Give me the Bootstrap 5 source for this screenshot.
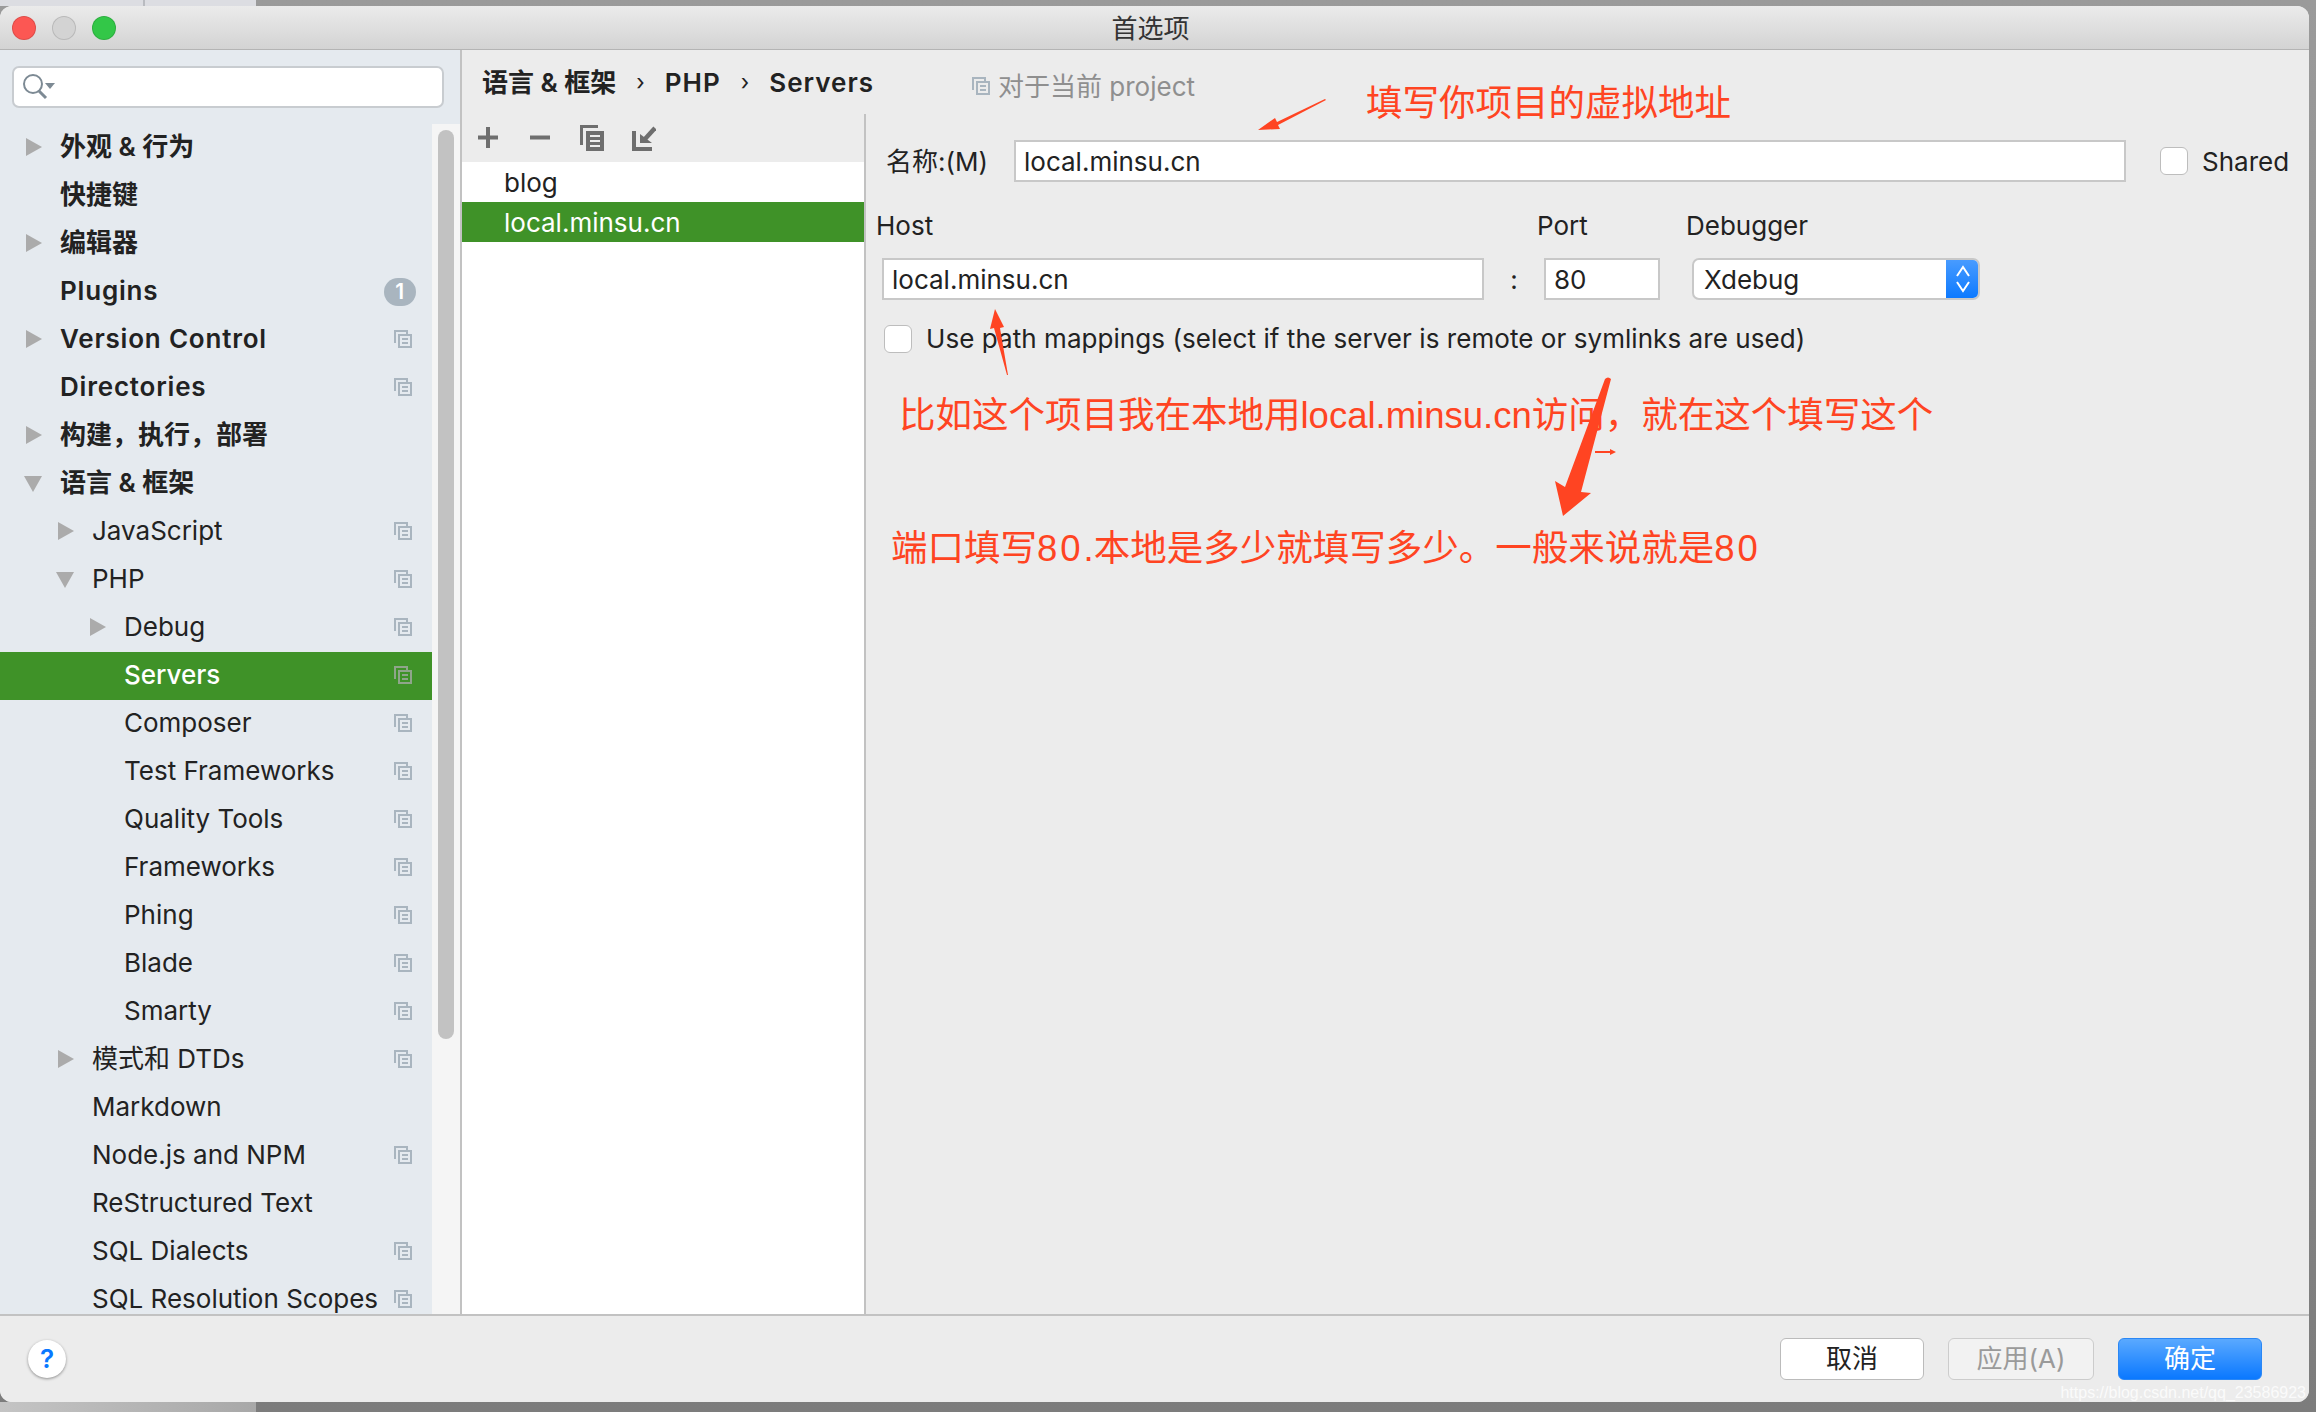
<!DOCTYPE html>
<html lang="zh-CN">
<head>
  <meta charset="UTF-8" />
  <meta name="viewport" content="width=device-width, initial-scale=1" />
  <title>首选项</title>
  <link href="https://cdn.jsdelivr.net/npm/bootstrap@5.3.0/dist/css/bootstrap.min.css" rel="stylesheet" />
  <style>
    html, body { height: 100%; overflow: hidden; }
    body {
      font-family: Inter, "Noto Sans CJK SC", sans-serif;
      font-size: 26px;
      color: #222;
      background: #9a9a9a;
    }
    .desk {
      width: 2316px; height: 1412px; padding-top: 6px; position: relative;
      background:
        linear-gradient(#b9bbc0, #b9bbc0) 143px top / 2px 6px no-repeat,
        linear-gradient(#dcdde2, #dcdde2) left top / 256px 6px no-repeat,
        linear-gradient(90deg, #c4c4c4, #a8a8a8) left bottom / 256px 10px no-repeat,
        linear-gradient(#9a9a9a 0, #7c7c7c 100%);
    }
    .win {
      width: 2309px; height: 1396px; background: #ececec;
      border-radius: 12px; overflow: hidden; position: relative;
    }
    .titlebar {
      height: 44px; flex: none; position: relative;
      background: linear-gradient(#ebebeb, #d3d3d3);
      border-bottom: 1px solid #b4b4b4;
    }
    .light { width: 24px; height: 24px; border-radius: 50%; border: 1px solid rgba(0,0,0,.12); }
    .light-red { background: #fc5753; }
    .light-grey { background: #d3d3d3; }
    .light-green { background: #33c748; }
    .lights { padding-left: 12px; gap: 16px; }
    .win-title { font-size: 26px; line-height: 46px; color: #333; left: 0; right: 8px; top: 0; }
    .panes { height: 1264px; flex: none; }
    .side {
      width: 462px; flex: none; background: #e5eaef; border-right: 2px solid #c2c2c2;
    }
    .search-wrap { height: 74px; padding: 16px 16px 0 12px; }
    .search-box {
      height: 42px; background: #fff; border: 2px solid #c8ccd0; border-radius: 7px;
      padding-left: 8px;
    }
    .tree-wrap { height: 1190px; }
    .tree { width: 432px; overflow: hidden; }
    .tree-row { height: 48px; flex: none; padding-right: 20px; white-space: nowrap; }
    .tree-row span { margin-top: -3px; }
    .tree-row.picked { background: #3f9228; color: #fff; font-weight: 500; }
    .tree-row.top { font-weight: 600; }
    .tree-row.top-latin { letter-spacing: .8px; }
    .lv0 { padding-left: 60px; }
    .lv1 { padding-left: 92px; }
    .lv2 { padding-left: 124px; }
    .arrow { position: absolute; margin-left: -36px; margin-top: -2px; width: 18px; height: 18px; }
    .scroll-track { width: 28px; background: #f5f5f5; padding: 6px 6px 0; }
    .scroll-thumb { height: 909px; background: #c2c2c2; border-radius: 8px; }
    .count-pill {
      width: 32px; height: 28px; border-radius: 14px; background: #a9b5bf; color: #fff;
      font-size: 21px; line-height: 28px; text-align: center; margin-right: -4px;
    }
    .row-copy { margin-top: -2px; }
    .ic-off, .scope-icon { color: #a9b5bf; }
    .ic-on { color: #8fa58a; }
    .crumbs { height: 64px; flex: none; padding-left: 20px; font-weight: 600; }
    .crumb-latin { letter-spacing: 1px; }
    .crumb-sep { font-weight: 400; font-size: 22px; margin: 0 20px; }
    .scope-note { color: #8f8f8f; font-weight: 400; margin-left: 98px; padding-top: 8px; }
    .list-pane { width: 404px; flex: none; border-right: 2px solid #c2c2c2; }
    .list-tools { height: 48px; padding-left: 16px; gap: 30px; }
    .tool-import { margin-left: -2px; }
    .list-body { background: #fff; }
    .list-item { height: 40px; padding-left: 42px; line-height: 42px; }
    .list-item.picked { background: #3f9228; color: #fff; }
    .form-pane { padding: 26px 20px 0 12px; }
    .field-label { margin-left: 8px; width: 128px; flex: none; }
    .flat-input.form-control {
      height: 42px; border: 2px solid #c8c8c8; border-radius: 0; font-size: 26px; color: #222;
      padding: 0 8px; background: #fff; font-family: Inter, sans-serif;
    }
    .name-input { width: 1112px; flex: none; }
    .tick.form-check-input {
      width: 28px; height: 28px; margin: 0; border: 1px solid #bdbdbd; border-radius: 6px; flex: none;
    }
    .shared-tick.form-check-input { margin-left: 34px; }
    .shared-label { margin-left: 14px; }
    .labels { margin-top: 24px; height: 44px; padding-bottom: 5px; }
    .host-label { width: 661px; margin-left: -2px; }
    .port-label { width: 149px; }
    .conn-row { margin-top: 8px; padding-left: 4px; }
    .host-input { width: 602px; flex: none; }
    .colon { width: 60px; flex: none; text-align: center; }
    .port-input { width: 116px; flex: none; }
    .debugger {
      width: 288px; height: 42px; margin-left: 32px; background: #fff; flex: none;
      border: 2px solid #c8c8c8; border-radius: 7px; padding-left: 10px; position: relative; overflow: hidden;
    }
    .stepper {
      width: 34px; position: absolute; right: -2px; top: -2px; bottom: -2px;
      background: linear-gradient(#4b9dff, #0a78ff);
    }
    .mapping-row { margin-top: 19px; padding-left: 6px; gap: 14px; letter-spacing: .06px; }
    .bottom-bar { height: 88px; flex: none; border-top: 2px solid #c2c2c2; background: #ececec; padding: 0 47px 0 28px; }
    .help-btn {
      width: 38px; height: 38px; border-radius: 50%; background: #fff; color: #0a78ff; font-weight: 600;
      box-shadow: 0 1px 3px rgba(0,0,0,.4); line-height: 38px; text-align: center; font-size: 26px;
    }
    .mac-btn.btn {
      width: 144px; height: 42px; padding: 0; font-size: 26px; line-height: 38px; border-radius: 6px;
      border: 1px solid #bbb; background: #fff; color: #222;
    }
    .mac-btn.apply { width: 146px; background: #f2f2f2; color: #9a9a9a; border-color: #ccc; opacity: 1; }
    .mac-btn.ok { background: linear-gradient(#5aa9ff, #0a78ff); color: #fff; border-color: #2a87f5; }
    .note { position: absolute; color: #ff4422; font-size: 36.5px; line-height: 48px; white-space: nowrap; font-family: "Liberation Sans", "Noto Sans CJK SC", sans-serif; }
    .note1 { left: 1366px; top: 80px; }
    .note2 { left: 899px; top: 392px; }
    .note3 { left: 891px; top: 525px; }
    .note-num { letter-spacing: 3px; }
    .scribble { position: absolute; left: 0; top: 0; pointer-events: none; }
    .stamp {
      position: absolute; right: 3px; bottom: 0; color: rgba(255,255,255,.8); font-size: 16px; line-height: 18px;
      font-family: "Liberation Sans", sans-serif;
    }
  </style>
</head>
<body>
  <svg width="0" height="0" class="d-block">
    <defs>
      <symbol id="ic-copy" viewBox="0 0 18 18">
        <path d="M1 13V1h12v3" fill="none" stroke="currentColor" stroke-width="2"/>
        <rect x="5" y="5" width="12" height="12" fill="none" stroke="currentColor" stroke-width="2"/>
        <path d="M8 9h6M8 13h6" stroke="currentColor" stroke-width="2"/>
      </symbol>
      <symbol id="ic-right" viewBox="0 0 18 18"><path d="M2 0l16 9-16 9z" fill="#ababab"/></symbol>
      <symbol id="ic-down" viewBox="0 0 18 18"><path d="M0 2h18l-9 16z" fill="#ababab"/></symbol>
    </defs>
  </svg>

  <div class="desk">
    <div class="win d-flex flex-column">
      <div class="titlebar d-flex align-items-center lights">
        <div class="light light-red"></div>
        <div class="light light-grey"></div>
        <div class="light light-green"></div>
        <div class="win-title position-absolute text-center">首选项</div>
      </div>

      <div class="panes d-flex">
        <div class="side d-flex flex-column">
          <div class="search-wrap">
            <div class="search-box d-flex align-items-center">
              <svg width="34" height="28" viewBox="0 0 34 28">
                <circle cx="11" cy="11" r="9" fill="none" stroke="#7d8a94" stroke-width="2"/>
                <path d="M17 18l7 7" stroke="#7d8a94" stroke-width="3"/>
                <path d="M23 10h10l-5 6z" fill="#7d8a94"/>
              </svg>
            </div>
          </div>
          <div class="tree-wrap d-flex">
            <div class="tree d-flex flex-column" id="tree"></div>
            <div class="scroll-track"><div class="scroll-thumb"></div></div>
          </div>
        </div>

        <div class="flex-grow-1 d-flex flex-column">
          <div class="crumbs d-flex align-items-center">
            <span>语言 &amp; 框架</span><span class="crumb-sep">›</span><span class="crumb-latin">PHP</span><span class="crumb-sep">›</span><span class="crumb-latin">Servers</span>
            <span class="scope-note d-flex align-items-center gap-2">
              <svg width="18" height="18" class="scope-icon"><use href="#ic-copy"/></svg>对于当前 project
            </span>
          </div>
          <div class="flex-grow-1 d-flex">
            <div class="list-pane d-flex flex-column">
              <div class="list-tools d-flex align-items-center">
                <svg width="22" height="22" viewBox="0 0 22 22"><path d="M10 0v21M0 10.500h20" stroke="#6e6e6e" stroke-width="4"/></svg>
                <svg width="20" height="22" viewBox="0 0 20 22"><path d="M0 10.500h20" stroke="#6e6e6e" stroke-width="4"/></svg>
                <svg width="24" height="26" viewBox="0 0 24 26">
                  <path d="M0 20V0h18v3H3v17z" fill="#6e6e6e"/>
                  <path d="M6 6h18v20H6z" fill="#6e6e6e"/>
                  <path d="M10 10h10v2H10zM10 15h10v2H10zM10 20h10v2H10z" fill="#ececec"/>
                </svg>
                <svg class="tool-import" width="24" height="26" viewBox="0 0 24 26">
                  <path d="M2 6v18h18" fill="none" stroke="#6e6e6e" stroke-width="4"/>
                  <path d="M13 14L23 3" stroke="#6e6e6e" stroke-width="4.500"/>
                  <path d="M8 9v9h12z" fill="#6e6e6e"/>
                </svg>
              </div>
              <div class="list-body flex-grow-1">
                <div class="list-item">blog</div>
                <div class="list-item picked">local.minsu.cn</div>
              </div>
            </div>

            <div class="form-pane flex-grow-1">
              <div class="d-flex align-items-center">
                <label class="field-label" for="srvName">名称:(M)</label>
                <input id="srvName" class="form-control flat-input name-input" value="local.minsu.cn" />
                <input id="srvShared" type="checkbox" class="form-check-input tick shared-tick" />
                <label class="shared-label" for="srvShared">Shared</label>
              </div>
              <div class="labels d-flex align-items-center">
                <div class="host-label">Host</div>
                <div class="port-label">Port</div>
                <div>Debugger</div>
              </div>
              <div class="conn-row d-flex align-items-center">
                <input class="form-control flat-input host-input" value="local.minsu.cn" />
                <div class="colon">:</div>
                <input class="form-control flat-input port-input" value="80" />
                <div class="debugger d-flex align-items-center">
                  Xdebug
                  <div class="stepper d-flex align-items-center justify-content-center">
                    <svg width="16" height="30" viewBox="0 0 16 30"><path d="M2 12l6-9 6 9M2 18l6 9 6-9" fill="none" stroke="#fff" stroke-width="2"/></svg>
                  </div>
                </div>
              </div>
              <div class="mapping-row d-flex align-items-center">
                <input id="srvMap" type="checkbox" class="form-check-input tick" />
                <label for="srvMap">Use path mappings (select if the server is remote or symlinks are used)</label>
              </div>
            </div>
          </div>
        </div>
      </div>

      <div class="bottom-bar d-flex align-items-center">
        <div class="help-btn">?</div>
        <div class="ms-auto d-flex gap-4">
          <button class="btn mac-btn">取消</button>
          <button class="btn mac-btn apply" disabled>应用(A)</button>
          <button class="btn mac-btn ok">确定</button>
        </div>
      </div>

      <div class="stamp">https://blog.csdn.net/qq_23586923</div>
    </div>

    <div class="note note1">填写你项目的虚拟地址</div>
    <div class="note note2">比如这个项目我在本地用local.minsu.cn访问，就在这个填写这个</div>
    <div class="note note3">端口填写<span class="note-num">80</span>.本地是多少就填写多少。一般来说就是<span class="note-num">80</span></div>
    <svg class="scribble" width="2316" height="1412" viewBox="0 0 2316 1412">
      <path d="M1325 99L1277 122l-2-4-17 12 22-1-2-4L1326 100z" fill="#ff4422"/>
      <path d="M1008 375L1000 328l4-1-9-18-5 20 4-1L1007 375z" fill="#ff4422"/>
      <path d="M1605 379Q1608 376 1611 379L1581 492 1591 493 1563 516 1555 481 1565 487z" fill="#ff4422"/>
      <path d="M1595 451h15v-2l6 3-6 3v-2h-15z" fill="#ff4422"/>
    </svg>
  </div>

  <script>
    const rows = [
      ['外观 & 行为', 0, 'r', 1], ['快捷键', 0, '', 1], ['编辑器', 0, 'r', 1],
      ['Plugins', 0, '', 1, 'pill'], ['Version Control', 0, 'r', 1, 'c'], ['Directories', 0, '', 1, 'c'],
      ['构建，执行，部署', 0, 'r', 1], ['语言 & 框架', 0, 'd', 1],
      ['JavaScript', 1, 'r', 0, 'c'], ['PHP', 1, 'd', 0, 'c'], ['Debug', 2, 'r', 0, 'c'],
      ['Servers', 2, '', 2, 'c'], ['Composer', 2, '', 0, 'c'], ['Test Frameworks', 2, '', 0, 'c'],
      ['Quality Tools', 2, '', 0, 'c'], ['Frameworks', 2, '', 0, 'c'], ['Phing', 2, '', 0, 'c'],
      ['Blade', 2, '', 0, 'c'], ['Smarty', 2, '', 0, 'c'], ['模式和 DTDs', 1, 'r', 0, 'c'],
      ['Markdown', 1, '', 0], ['Node.js and NPM', 1, '', 0, 'c'], ['ReStructured Text', 1, '', 0],
      ['SQL Dialects', 1, '', 0, 'c'], ['SQL Resolution Scopes', 1, '', 0, 'c']
    ];
    const tree = document.getElementById('tree');
    rows.forEach(function (r) {
      const el = document.createElement('div');
      el.className = 'tree-row d-flex align-items-center lv' + r[1];
      if (r[3] === 1) el.classList.add('top');
      if (r[3] === 1 && /^[A-Z]/.test(r[0])) el.classList.add('top-latin');
      if (r[3] === 2) el.classList.add('picked');
      let html = '';
      if (r[2]) html += '<svg class="arrow"><use href="#ic-' + (r[2] === 'r' ? 'right' : 'down') + '"/></svg>';
      html += '<span></span>';
      if (r[4] === 'c') html += '<svg width="18" height="18" class="ms-auto row-copy ' + (r[3] === 2 ? 'ic-on' : 'ic-off') + '"><use href="#ic-copy"/></svg>';
      if (r[4] === 'pill') html += '<div class="count-pill ms-auto">1</div>';
      el.innerHTML = html;
      el.querySelector('span').textContent = r[0];
      tree.appendChild(el);
    });
  </script>
  <script src="https://cdn.jsdelivr.net/npm/bootstrap@5.3.0/dist/js/bootstrap.bundle.min.js"></script>
</body>
</html>
